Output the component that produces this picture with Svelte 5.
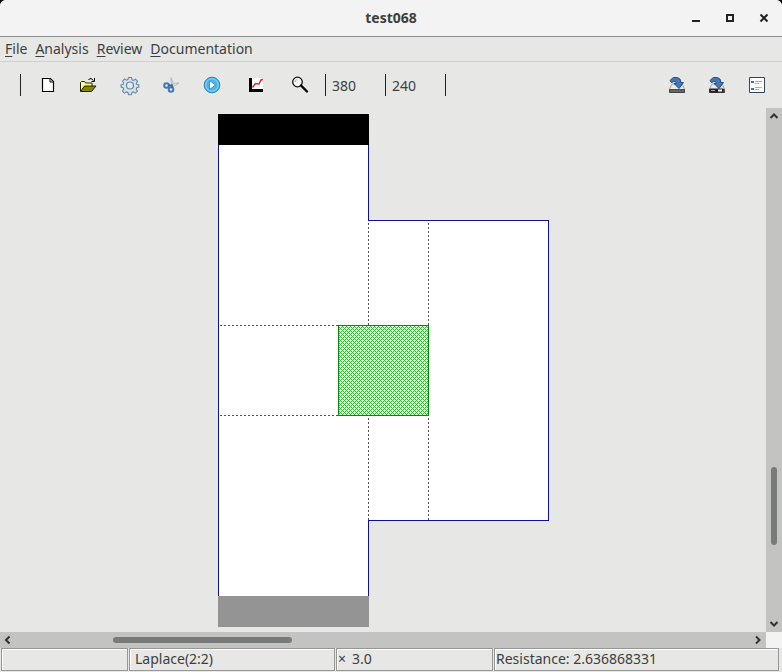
<script>
    let title = 'test068';
    let width = 380;
    let height = 240;

    const menus = ['File', 'Analysis', 'Review', 'Documentation'];

    const scroll = {
        horizontal: { start: 13.2, size: 24.4 },
        vertical: { start: 69.7, size: 15.9 }
    };
</script>

<div class="window">
    <header class="titlebar">
        <h1>{title}</h1>
        <div class="controls">
            <button aria-label="Minimize">
                <svg width="12" height="12" viewBox="0 0 12 12"><path d="M2 9h8" stroke="#222" stroke-width="2" /></svg>
            </button>
            <button aria-label="Maximize">
                <svg width="12" height="12" viewBox="0 0 12 12"><path d="M3 3h6v6H3z" fill="none" stroke="#222" stroke-width="2" /></svg>
            </button>
            <button aria-label="Close">
                <svg width="12" height="12" viewBox="0 0 12 12"><path d="M2.5 2.5l7 7M9.5 2.5l-7 7" stroke="#222" stroke-width="2" /></svg>
            </button>
        </div>
    </header>

    <nav class="menubar">
        {#each menus as menu}
            <button><u>{menu[0]}</u>{menu.slice(1)}</button>
        {/each}
    </nav>

    <div class="toolbar">
        <div class="tools">
            <button aria-label="New">
                <svg width="24" height="24" viewBox="0 0 24 24">
                    <path d="M6.5 5.5h8l3 3v10h-11z" fill="#fff" stroke="#000" stroke-width="1.2" />
                    <path d="M14 5.5v3.5h3.5" fill="none" stroke="#000" />
                </svg>
            </button>
            <button aria-label="Open">
                <svg width="24" height="24" viewBox="0 0 24 24">
                    <path d="M3.5 18V9.5l1-1h3l1 1.500h6.500V13" fill="#ffff8c" stroke="#222200" />
                    <path d="M3.500 18.500l4-5.500h11.500l-4.500 5.500z" fill="#858500" stroke="#222200" />
                    <path d="M11.500 6.500q2.500-2.500 5 1M17.500 5v3.500h-3" fill="none" stroke="#000" />
                </svg>
            </button>
            <button aria-label="Settings">
                <svg width="24" height="24" viewBox="0 0 24 24" fill="none" stroke="#6588a6">
                    <path d="M10.500 4.500h3l.6 2.300 1.400.6 2-1.200 2 2.200-1.200 2 .5 1 2 .6v2l-2 .7-.6 1.400 1.200 2-2 2-2-1.200-1.400.6-.7 2.200h-2.700l-.7-2.200-1.400-.6-2 1.200-2-2 1.200-2-.6-1.400-2-.7v-2l2-.6.6-1.400-1.200-1.800 2-2.200 2 1.200 1.400-.6z" stroke-width="1.100" fill="#d5e2ea" />
                    <circle cx="12" cy="12.500" r="3.500" fill="#e7e7e5" stroke-width="1.200" />
                </svg>
            </button>
            <button aria-label="Cut">
                <svg width="24" height="24" viewBox="0 0 24 24" fill="none">
                    <path d="M12 4.500q-1 4.500 2 9.500l1-1q-1-4-3-8.500z" fill="#d9dddd" stroke="#a8adb0" stroke-width=".7" />
                    <path d="M20 10q-5-1-9 3l1 1q5-1 8-4z" fill="#d9dddd" stroke="#a8adb0" stroke-width=".7" />
                    <circle cx="7.500" cy="12.500" r="2.300" stroke="#4778b3" stroke-width="2" />
                    <circle cx="12" cy="16.500" r="2.300" stroke="#4778b3" stroke-width="2" />
                    <path d="M9 12.500l4-.5v3" stroke="#315f98" stroke-width="1.500" />
                </svg>
            </button>
            <button aria-label="Run">
                <svg width="24" height="24" viewBox="0 0 24 24">
                    <circle cx="12" cy="12" r="7.800" fill="#48b5e9" stroke="#2685bd" />
                    <circle cx="12" cy="12" r="6.200" fill="none" stroke="#a4def7" stroke-width=".8" />
                    <path d="M9.500 7.500v9l6-4.500z" fill="#fff" stroke="#2480b6" stroke-width=".8" />
                </svg>
            </button>
        </div>
        <div class="tools wide">
            <button aria-label="Plot">
                <svg width="24" height="24" viewBox="0 0 24 24">
                    <path d="M5 5h14v14H5z" fill="#fff" />
                    <path d="M6.500 5v12.500h12.500" fill="none" stroke="#000" stroke-width="3" />
                    <path d="M8.500 14.500l3-4 3.500.5 2-4 2-.5" fill="none" stroke="#e32636" stroke-width="1.500" />
                </svg>
            </button>
            <button aria-label="Zoom">
                <svg width="24" height="24" viewBox="0 0 24 24">
                    <circle cx="9.500" cy="9" r="4.800" fill="#f5f5f4" stroke="#111" stroke-width="1.300" />
                    <path d="M13 12.500l6 6" stroke="#000" stroke-width="2.400" stroke-linecap="round" />
                    <path d="M7 9q0-2 2-2.500" fill="none" stroke="#aaa" />
                </svg>
            </button>
        </div>
        <div class="coords">
            <input aria-label="X" bind:value={width} />
            <input aria-label="Y" bind:value={height} />
        </div>
        <div class="tools right">
            {#each ['Save', 'Save as'] as label}
                <button aria-label={label}>
                    <svg width="24" height="24" viewBox="0 0 24 24">
                        <path d="M7 11h10l2.500 5v3.500h-15V16z" fill="#e9eaea" stroke="#909494" stroke-width=".8" />
                        <path d="M4.500 16.500h15v3h-15z" fill="#626666" stroke="#333" stroke-width=".8" />
                        <path d="M5 7.500Q8 3 12.500 4.500q3.500 1 3.500 5h2.500l-4.500 6-5-5h2.500q-.5-3.500-5-1z" fill="#4476b8" stroke="#244f86" />
                        {#if label === 'Save as'}
                            <path d="M4.500 15.500h14v4h-14z" fill="#222" />
                            <path d="M13 16.500h4v2h-4z" fill="#fff" />
                            <path d="M6 17.500h4" stroke="#aaa" />
                        {/if}
                    </svg>
                </button>
            {/each}
            <button aria-label="Properties">
                <svg width="24" height="24" viewBox="0 0 24 24">
                    <path d="M4.500 4.500h15v15h-15z" fill="#fff" stroke="#35465a" />
                    <path d="M6 9h3M6 16h3" stroke="#3974bd" stroke-width="2" />
                    <path d="M10 8.500h7M10 10.500h4M10 14.500h7M10 16.500h4" stroke="#aab0b7" />
                </svg>
            </button>
        </div>
    </div>

    <main class="view">
        <svg class="canvas" role="img" aria-label="Resistor geometry">
            <defs>
                <pattern id="hatch" width="4" height="4" patternUnits="userSpaceOnUse">
                    <rect width="4" height="4" fill="#f0fff0" />
                    <path d="M0 0h1v1H0zM1 1h1v1H1zM2 2h1v1H2zM3 3h1v1H3zM3 1h1v1H3zM1 3h1v1H1z" fill="#10d010" />
                </pattern>
            </defs>
            <path d="M218 6h151v106h180v301H369v106H218z" fill="#fff" />
            <path d="M218.500 37v451M368.500 37v75.500h180v300h-180V488" fill="none" stroke="#1010a0" />
            <rect x="218" y="6" width="151" height="31" fill="#000" />
            <rect x="218" y="488" width="151" height="31" fill="#949494" />
            <path class="guide" d="M220 217.500h118M220 307.500h118M368.500 115v102M428.500 115v102M368.500 310v102M428.500 310v102" />
            <rect x="338.500" y="217.500" width="90" height="90" fill="url(#hatch)" stroke="#088808" />
        </svg>
        <div class="scrollbar vertical">
            <button aria-label="Scroll up">
                <svg width="10" height="8" viewBox="0 0 10 8"><path d="M1.500 6L5 2.500 8.500 6" /></svg>
            </button>
            <div class="track">
                <div class="thumb" style="top: {scroll.vertical.start}%; height: {scroll.vertical.size}%"></div>
            </div>
            <button aria-label="Scroll down">
                <svg width="10" height="8" viewBox="0 0 10 8"><path d="M1.500 2L5 5.500 8.500 2" /></svg>
            </button>
        </div>
        <div class="scrollbar horizontal">
            <button aria-label="Scroll left">
                <svg width="8" height="10" viewBox="0 0 8 10"><path d="M5.500 1.500L2 5l3.500 3.500" /></svg>
            </button>
            <div class="track">
                <div class="thumb" style="left: {scroll.horizontal.start}%; width: {scroll.horizontal.size}%"></div>
            </div>
            <button aria-label="Scroll right">
                <svg width="8" height="10" viewBox="0 0 8 10"><path d="M2 1.500L5.500 5 2 8.500" /></svg>
            </button>
        </div>
    </main>

    <footer class="status">
        <div></div>
        <div class="indent">Laplace(2:2)</div>
        <div class="scale"><span>×</span> 3.0</div>
        <div>Resistance: 2.636868331</div>
    </footer>
</div>

<style>
    :global(body) {
        background: #000;
    }
    .window {
        display: flex;
        flex-direction: column;
        height: 100vh;
        overflow: hidden;
        border-radius: 6px 6px 0 0;
        background: #e7e7e5;
        color: #3c3f40;
        font-family: "Noto Sans", "Open Sans", sans-serif;
        font-size: 14px;
        line-height: 20px;
    }
    button {
        display: flex;
        align-items: center;
        justify-content: center;
        padding: 0;
        border: 0;
        background: none;
        color: inherit;
        font: inherit;
    }

    .titlebar {
        display: grid;
        grid-template-columns: 1fr auto 1fr;
        align-items: center;
        height: 37px;
        box-sizing: border-box;
        border-bottom: 1px solid #8d8f8f;
        background: #f3f3f3;
        flex: none;
    }
    h1 {
        grid-column: 2;
        margin: 0;
        font-size: 14px;
        font-weight: 700;
    }
    .controls {
        display: flex;
        justify-content: flex-end;
        padding-right: 1px;
    }
    .controls button {
        width: 34px;
        height: 34px;
    }

    .menubar {
        display: flex;
        gap: 8px;
        padding: 2px 5px;
        height: 25px;
        box-sizing: border-box;
        border-bottom: 1px solid #d0d0ce;
        flex: none;
    }
    .menubar u {
        text-underline-offset: 2px;
    }

    .toolbar {
        display: flex;
        align-items: center;
        height: 46px;
        flex: none;
        padding: 0 5px 0 20px;
    }
    .tools {
        display: flex;
        align-items: center;
    }
    .tools:first-child {
        padding-left: 6px;
        border-left: 1px solid #222;
    }
    .tools button {
        width: 41px;
        height: 22px;
    }
    .tools.wide {
        padding: 0 3px 0 2px;
    }
    .tools.wide button {
        width: 44px;
    }
    .tools.right {
        margin-left: auto;
    }
    .tools.right button {
        width: 40px;
    }
    .coords {
        display: flex;
        border-right: 1px solid #222;
    }
    .coords input {
        width: 60px;
        height: 22px;
        box-sizing: border-box;
        padding: 0 6px;
        border: 0;
        border-left: 1px solid #222;
        border-radius: 0;
        background: none;
        color: inherit;
        font: inherit;
    }

    .view {
        display: grid;
        grid-template: minmax(0, 1fr) 16px / minmax(0, 1fr) 16px;
        flex: 1;
        min-height: 0;
        background: #f3f3f3;
    }
    .canvas {
        width: 100%;
        height: 100%;
        background: #e7e7e5;
        shape-rendering: crispEdges;
    }
    .guide {
        stroke: #555;
        stroke-dasharray: 2 2;
    }
    .scrollbar {
        display: flex;
        background: #c3c4c2;
    }
    .scrollbar.vertical {
        flex-direction: column;
    }
    .scrollbar button {
        width: 16px;
        height: 16px;
    }
    .scrollbar path {
        fill: none;
        stroke: #2e3436;
        stroke-width: 2;
    }
    .track {
        position: relative;
        flex: 1;
    }
    .thumb {
        position: absolute;
        border-radius: 3px;
        background: #797b7a;
    }
    .vertical .thumb {
        left: 5px;
        width: 6px;
    }
    .horizontal .thumb {
        top: 5px;
        height: 6px;
    }

    .status {
        display: grid;
        grid-template-columns: 127px 206px 157px 1fr;
        gap: 1px;
        height: 24px;
        box-sizing: border-box;
        padding: 0 3px 1px 1px;
        flex: none;
        white-space: nowrap;
    }
    .status div {
        padding: 0 1px;
        border: 1px solid #979896;
        box-shadow: inset 1px 1px #fff;
    }
    .status .indent {
        padding: 0 5px;
    }
    .status .scale {
        display: flex;
        gap: 6px;
    }
</style>
